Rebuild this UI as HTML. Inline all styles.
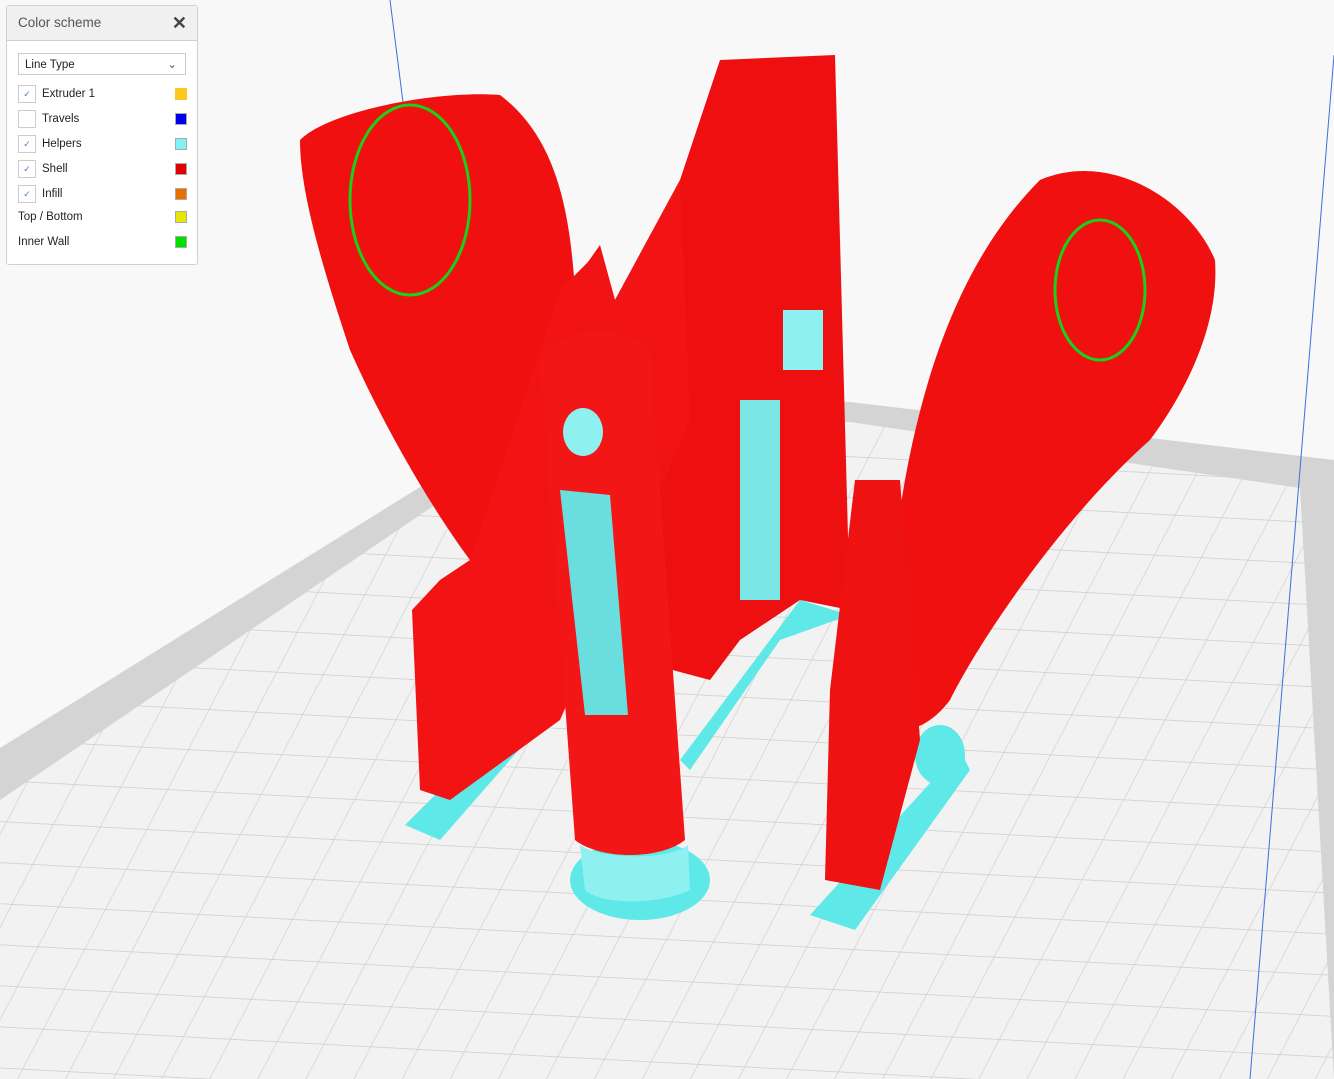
<!DOCTYPE html>
<html><head><style>
body{margin:0;width:1334px;height:1079px;overflow:hidden;background:#f8f8f8;font-family:"Liberation Sans",sans-serif;position:relative}
svg{position:absolute;left:0;top:0}
.panel{position:absolute;left:6px;top:5px;width:190px;height:258px;background:#fff;border:1px solid #d0d0d0;border-radius:3px;font-size:11.5px;color:#222}
.hd{height:34px;background:#f0f0f0;border-bottom:1px solid #d0d0d0;font-size:13.5px;color:#555;line-height:34px;padding-left:11px;position:relative}
.hd b{position:absolute;right:10px;top:0;font-size:18px;color:#444}
.sel{position:absolute;left:11px;top:47px;height:22px;border:1px solid #ccc;line-height:22px;padding-left:6px;box-sizing:border-box;width:168px}
.row{position:absolute;left:11px;height:18px;line-height:18px;width:170px}
.cb{position:absolute;left:0;top:0;width:16px;height:16px;border:1px solid #ccc;color:#3a7bd5;font-size:9px;text-align:center;line-height:16px}
.sw{position:absolute;left:157px;top:3px;width:10px;height:10px;border:1px solid #aaa}
</style></head><body>
<svg width="1334" height="1079">
<defs><pattern id="g" width="48" height="40" patternUnits="userSpaceOnUse" patternTransform="skewX(-25) rotate(3)"><rect width="48" height="40" fill="#f2f2f2"/><path d="M0 0H48M0 0V40" stroke="#cfcfcf" stroke-width="1.5"/></pattern></defs>
<polygon points="0,748 560,400 850,402 1334,460 1334,1079 0,1079" fill="#d4d4d4"/>
<polygon points="0,800 560,420 850,422 1300,488 1334,1079 0,1079" fill="url(#g)"/>
<line x1="390" y1="0" x2="404" y2="110" stroke="#3a6fe0"/>
<line x1="1334" y1="55" x2="1250" y2="1079" stroke="#3a6fe0"/>
<ellipse cx="640" cy="880" rx="70" ry="40" fill="#5fe8e8"/>
<polygon points="405,825 570,660 580,680 440,840" fill="#5fe8e8"/>
<polygon points="810,915 960,750 970,770 855,930" fill="#5fe8e8"/>
<ellipse cx="940" cy="755" rx="25" ry="30" fill="#5fe8e8"/>
<polygon points="680,760 800,600 850,615 780,640 690,770" fill="#5fe8e8"/>
<path d="M300,140 C330,110 440,90 500,95 C560,140 570,220 575,290 L520,560 L470,560 C440,520 390,440 350,350 C320,260 300,190 300,140Z" fill="#f01010"/>
<ellipse cx="410" cy="200" rx="60" ry="95" fill="none" stroke="#1ad01a" stroke-width="3"/>
<polygon points="540,330 600,245 615,300 680,180 720,60 835,55 850,610 800,600 740,640 710,680 560,640" fill="#ee1010"/>
<polygon points="412,610 440,580 470,560 560,290 600,250 615,300 680,180 690,420 560,720 450,800 420,790" fill="#f21414"/>
<rect x="783" y="310" width="40" height="60" fill="#8ff0f0"/>
<rect x="740" y="400" width="40" height="200" fill="#7ae6e6"/>
<path d="M900,510 C920,380 960,260 1040,180 C1110,150 1190,200 1215,260 C1220,330 1180,400 1150,440 C1060,520 980,640 950,700 C920,740 880,740 860,700Z" fill="#f01010"/>
<ellipse cx="1100" cy="290" rx="45" ry="70" fill="none" stroke="#1ad01a" stroke-width="3"/>
<polygon points="830,690 855,480 900,480 920,740 880,890 825,880" fill="#ee1212"/>
<path d="M540,360 C550,330 620,320 650,350 L685,840 C660,860 600,860 575,840Z" fill="#f21616"/>
<polygon points="560,490 610,495 628,715 585,715" fill="#6adede"/>
<path d="M580,845 C600,860 670,860 688,845 L690,890 C660,905 600,905 585,890Z" fill="#8ff0f0"/>
<ellipse cx="583" cy="432" rx="20" ry="24" fill="#8ff0f0"/>
</svg>
<div class="panel">
<div class="hd">Color scheme<b>✕</b></div>
<div class="sel">Line Type<span style="position:absolute;right:8px;top:0;color:#555">⌄</span></div>
<div class="row" style="top:79px"><div class="cb">✓</div><span style="margin-left:24px">Extruder 1</span><div class="sw" style="background:#fcc820;border-color:#fcc820"></div></div>
<div class="row" style="top:104px"><div class="cb"></div><span style="margin-left:24px">Travels</span><div class="sw" style="background:#0000f0"></div></div>
<div class="row" style="top:129px"><div class="cb">✓</div><span style="margin-left:24px">Helpers</span><div class="sw" style="background:#80f4f4"></div></div>
<div class="row" style="top:154px"><div class="cb">✓</div><span style="margin-left:24px">Shell</span><div class="sw" style="background:#e00000"></div></div>
<div class="row" style="top:179px"><div class="cb">✓</div><span style="margin-left:24px">Infill</span><div class="sw" style="background:#e87000"></div></div>
<div class="row" style="top:202px"><span>Top / Bottom</span><div class="sw" style="background:#e6e600"></div></div>
<div class="row" style="top:227px"><span>Inner Wall</span><div class="sw" style="background:#00e000"></div></div>
</div>
</body></html>
